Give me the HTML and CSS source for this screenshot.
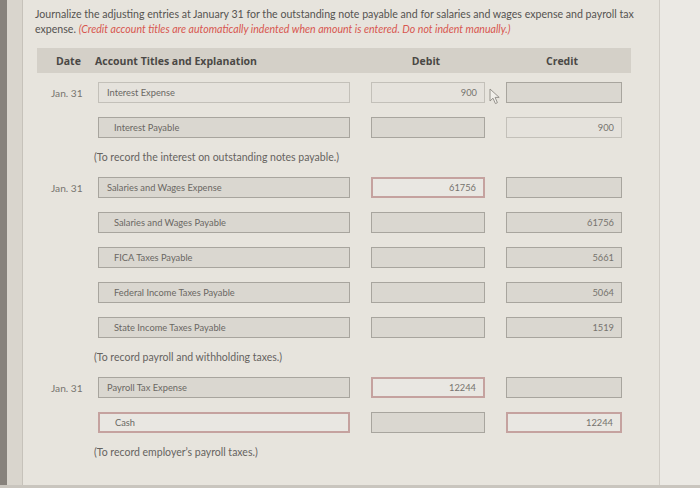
FILE: index.html
```html
<!DOCTYPE html>
<html lang="en">
<head>
<meta charset="utf-8">
<title>Journal entries</title>
<link rel="stylesheet" href="styles.css">
</head>
<body>
<div class="screen">
  <div class="edge-dark"></div>
  <div class="edge-light"></div>
  <main class="page">
    <p class="prompt">Journalize the adjusting entries at January 31 for the outstanding note payable and for salaries and wages expense and payroll tax expense. <em class="note">(Credit account titles are automatically indented when amount is entered. Do not indent manually.)</em></p>

    <div class="journal">
      <div class="head">
        <span class="h-date">Date</span>
        <span class="h-acct">Account Titles and Explanation</span>
        <span class="h-num">Debit</span>
        <span class="h-num">Credit</span>
      </div>

      <div class="grid">
        <div class="date">Jan. 31</div>
        <div class="field light">Interest Expense</div>
        <div class="field light num">900</div>
        <div class="field"></div>

        <div class="date"></div>
        <div class="field indent">Interest Payable</div>
        <div class="field"></div>
        <div class="field light num">900</div>

        <div class="expl">(To record the interest on outstanding notes payable.)</div>

        <div class="date">Jan. 31</div>
        <div class="field">Salaries and Wages Expense</div>
        <div class="field err num">61756</div>
        <div class="field"></div>

        <div class="date"></div>
        <div class="field indent">Salaries and Wages Payable</div>
        <div class="field"></div>
        <div class="field num">61756</div>

        <div class="date"></div>
        <div class="field indent">FICA Taxes Payable</div>
        <div class="field"></div>
        <div class="field num">5661</div>

        <div class="date"></div>
        <div class="field indent">Federal Income Taxes Payable</div>
        <div class="field"></div>
        <div class="field num">5064</div>

        <div class="date"></div>
        <div class="field indent">State Income Taxes Payable</div>
        <div class="field"></div>
        <div class="field num">1519</div>

        <div class="expl">(To record payroll and withholding taxes.)</div>

        <div class="date">Jan. 31</div>
        <div class="field">Payroll Tax Expense</div>
        <div class="field err num">12244</div>
        <div class="field"></div>

        <div class="date"></div>
        <div class="field err indent">Cash</div>
        <div class="field"></div>
        <div class="field err num">12244</div>

        <div class="expl">(To record employer’s payroll taxes.)</div>
      </div>

      <svg class="pointer" width="12" height="17" viewBox="0 0 12 17" aria-hidden="true">
        <path d="M1 1 L1 13 L4 10.2 L6.4 15.6 L8.4 14.7 L6.1 9.4 L10.2 9.4 Z" fill="#f1efea" stroke="#8d8a84" stroke-width="0.9" stroke-linejoin="round"/>
      </svg>
    </div>
  </main>
  <div class="side"></div>
</div>
<div class="bottom"></div>
</body>
</html>
```

FILE: styles.css
```css
html, body {
  margin: 0;
  padding: 0;
}

body {
  width: 700px;
  height: 488px;
  overflow: hidden;
  background: #cdc9c2;
  font-family: Lato, "Open Sans", "Liberation Sans", sans-serif;
}

.screen {
  display: flex;
  height: 485px;
}

.edge-dark {
  width: 7px;
  background: #87827c;
}

.edge-light {
  width: 15px;
  background: #d9d5cd;
}

.page {
  width: 638px;
  background: #e7e4dd;
  border-left: 1px solid #c6c2ba;
  border-right: 1px solid #d0ccc5;
  padding: 7px 0 0 12px;
  box-sizing: border-box;
}

.side {
  flex: 1;
  background: #ebe9e4;
}

.bottom {
  height: 3px;
  background: #c9c5be;
}

.prompt {
  margin: 0;
  font-size: 10.6px;
  line-height: 15px;
  color: #555350;
  width: 612px;
}

.note {
  color: #d8564f;
  font-style: italic;
}

.journal {
  position: relative;
  margin: 11px 0 0 2px;
  width: 594px;
}

.head {
  display: grid;
  grid-template-columns: 40px 252px 114px 116px;
  column-gap: 21px;
  align-items: center;
  height: 25px;
  background: #d4d0c8;
  font-family: "Open Sans", Lato, sans-serif;
  font-weight: 700;
  font-size: 10.5px;
  color: #4a4845;
}

.h-date {
  padding-left: 19px;
}

.h-acct {
  margin-left: -3px;
  white-space: nowrap;
}

.h-num {
  text-align: center;
  margin-left: -4px;
}

.grid {
  display: grid;
  grid-template-columns: 40px 252px 114px 116px;
  column-gap: 21px;
  row-gap: 14px;
  margin-top: 9px;
}

.date {
  font-size: 10.2px;
  color: #77746f;
  padding-left: 14px;
  align-self: center;
  white-space: nowrap;
}

.field {
  box-sizing: border-box;
  height: 21px;
  background: #dad7d0;
  border: 1px solid #a8a59e;
  font-size: 9.3px;
  color: #6a6763;
  padding: 0 8px;
  display: flex;
  align-items: center;
}

.field.light {
  background: #e5e2dc;
  border-color: #c3c0b9;
}

.field.indent {
  padding-left: 15px;
}

.field.num {
  justify-content: flex-end;
  padding: 0 7px;
  color: #76736e;
}

.field.err {
  background: #e9e7e2;
  border: 2px solid #c5a29f;
}

.expl {
  grid-column: 2 / -1;
  height: 11px;
  margin-left: -4px;
  font-size: 10.5px;
  line-height: 11px;
  color: #66635f;
}

.pointer {
  position: absolute;
  left: 452px;
  top: 40px;
}
```
